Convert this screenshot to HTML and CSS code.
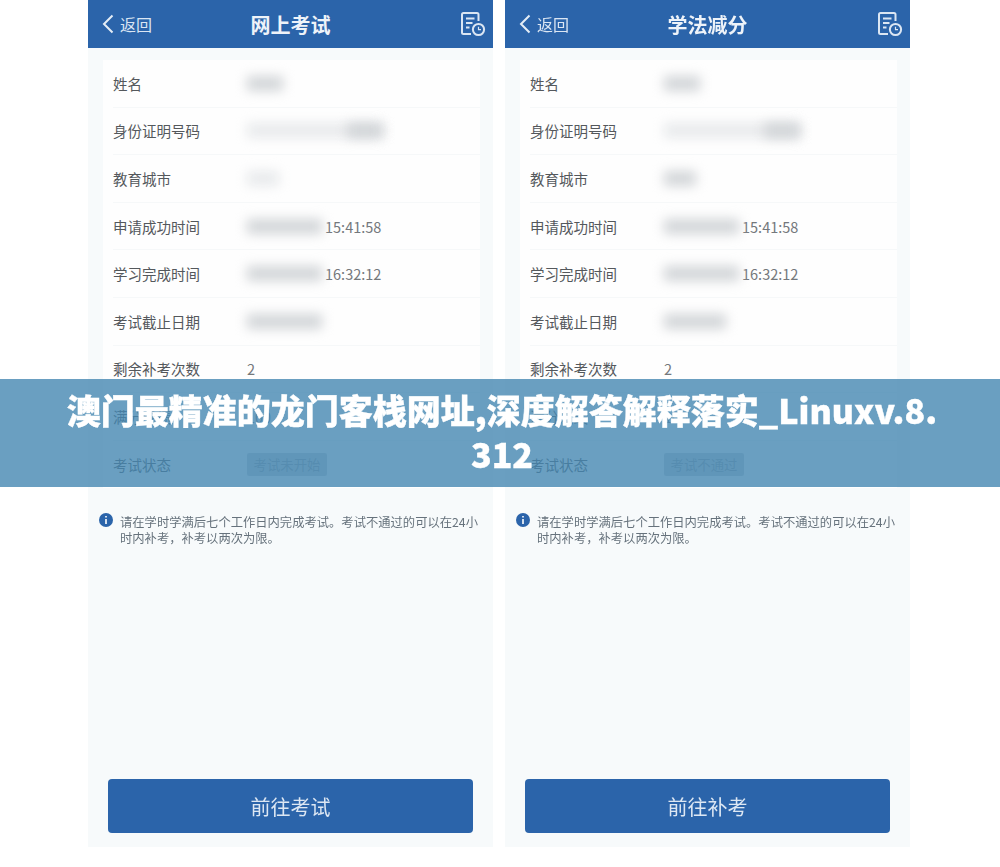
FILE: index.html
```html
<!DOCTYPE html>
<html lang="zh-CN">
  <head>
    <meta charset="utf-8">
    <title>澳门最精准的龙门客栈网址</title>
    <link rel="stylesheet" href="styles.css">
  </head>
  <body>
    <div class="phones">
      <div class="phone">
        <div class="top-bar">
          <div class="back">
            <svg class="back-icon" viewBox="0 0 12 20"><path d="M10.5 1.5 L2 10 L10.5 18.5"/></svg>
            <span>返回</span>
          </div>
          <div class="bar-title">网上考试</div>
          <svg class="doc-icon" viewBox="0 0 26 26">
            <path d="M18.5 10V3.5a1.5 1.5 0 0 0-1.5-1.5H3.5A1.5 1.5 0 0 0 2 3.5v18A1.5 1.5 0 0 0 3.500 23H11"/>
            <path d="M6 7.500h8.500M6 12h6.500M6 16.500h3.500"/>
            <circle cx="18.500" cy="18.500" r="5.600"/>
            <path class="thin" d="M18.500 15.800v2.900h2.500"/>
          </svg>
        </div>
        <div class="card">
          <div class="row"><span class="label">姓名</span><span class="smear w-36"></span></div>
          <div class="row"><span class="label">身份证明号码</span><span class="smear faint w-100"></span><span class="smear w-36 tuck"></span></div>
          <div class="row"><span class="label">教育城市</span><span class="smear faint w-32"></span></div>
          <div class="row"><span class="label">申请成功时间</span><span class="smear w-75"></span><span class="time">15:41:58</span></div>
          <div class="row"><span class="label">学习完成时间</span><span class="smear w-75"></span><span class="time">16:32:12</span></div>
          <div class="row"><span class="label">考试截止日期</span><span class="smear w-75"></span></div>
          <div class="row"><span class="label">剩余补考次数</span><span class="value">2</span></div>
          <div class="row"><span class="label">满分成绩</span><span class="value">100</span></div>
          <div class="row"><span class="label">考试状态</span><span class="badge">考试未开始</span></div>
        </div>
        <div class="note">
          <svg class="info-icon" viewBox="0 0 14 14"><circle cx="7" cy="7" r="7"/><path d="M7 3v1.600M7 6v5"/></svg>
          <p>请在学时学满后七个工作日内完成考试。考试不通过的可以在24小时内补考，补考以两次为限。</p>
        </div>
        <button class="action">前往考试</button>
      </div>

      <div class="phone">
        <div class="top-bar">
          <div class="back">
            <svg class="back-icon" viewBox="0 0 12 20"><path d="M10.5 1.5 L2 10 L10.5 18.5"/></svg>
            <span>返回</span>
          </div>
          <div class="bar-title">学法减分</div>
          <svg class="doc-icon" viewBox="0 0 26 26">
            <path d="M18.5 10V3.5a1.5 1.5 0 0 0-1.5-1.5H3.5A1.5 1.5 0 0 0 2 3.5v18A1.5 1.5 0 0 0 3.500 23H11"/>
            <path d="M6 7.500h8.500M6 12h6.500M6 16.500h3.500"/>
            <circle cx="18.500" cy="18.500" r="5.600"/>
            <path class="thin" d="M18.500 15.800v2.900h2.500"/>
          </svg>
        </div>
        <div class="card">
          <div class="row"><span class="label">姓名</span><span class="smear w-36"></span></div>
          <div class="row"><span class="label">身份证明号码</span><span class="smear faint w-100"></span><span class="smear w-36 tuck"></span></div>
          <div class="row"><span class="label">教育城市</span><span class="smear w-32"></span></div>
          <div class="row"><span class="label">申请成功时间</span><span class="smear w-75"></span><span class="time">15:41:58</span></div>
          <div class="row"><span class="label">学习完成时间</span><span class="smear w-75"></span><span class="time">16:32:12</span></div>
          <div class="row"><span class="label">考试截止日期</span><span class="smear w-62"></span></div>
          <div class="row"><span class="label">剩余补考次数</span><span class="value">2</span></div>
          <div class="row"><span class="label">满分成绩</span><span class="value">100</span></div>
          <div class="row"><span class="label">考试状态</span><span class="badge">考试不通过</span></div>
        </div>
        <div class="note">
          <svg class="info-icon" viewBox="0 0 14 14"><circle cx="7" cy="7" r="7"/><path d="M7 3v1.600M7 6v5"/></svg>
          <p>请在学时学满后七个工作日内完成考试。考试不通过的可以在24小时内补考，补考以两次为限。</p>
        </div>
        <button class="action">前往补考</button>
      </div>
    </div>

    <div class="banner">
      <h1>澳门最精准的龙门客栈网址,深度解答解释落实_Linuxv.8.312</h1>
    </div>
  </body>
</html>
```

FILE: styles.css
```css
html, body {
  margin: 0;
  height: 867px;
  overflow: hidden;
  background-color: #ffffff;
}

body {
  position: relative;
  font-family: "Noto Sans CJK SC", "Noto Sans", sans-serif;
}

.phones {
  display: flex;
  gap: 12px;
  padding-left: 88px;
  filter: blur(0.6px);
}

.phone {
  width: 405px;
  height: 847px;
  display: flex;
  flex-direction: column;
  background-color: #f7fafb;
}

.top-bar {
  height: 48px;
  flex: none;
  display: flex;
  align-items: center;
  justify-content: space-between;
  padding: 0 7px 0 14px;
  background-color: #2b64aa;
  color: #ffffff;
}

.back {
  width: 120px;
  display: flex;
  align-items: center;
  gap: 6px;
  font-size: 16px;
  color: #dbe6f3;
}

.back-icon {
  width: 12px;
  height: 20px;
  fill: none;
  stroke: #e4edf6;
  stroke-width: 2;
}

.bar-title {
  margin-left: -4px;
  font-size: 20px;
  font-weight: 700;
  color: #eef3f9;
}

.doc-icon {
  width: 26px;
  height: 26px;
  margin-left: 97px;
  fill: none;
  stroke: #dbe6f3;
  stroke-width: 2;
}

.doc-icon .thin {
  stroke-width: 1.2;
}

.card {
  margin: 12px 13px 0 15px;
  padding: 0 0 0 10px;
  background-color: #fefefe;
}

.row {
  height: 47.6px;
  box-sizing: border-box;
  display: flex;
  align-items: center;
  border-bottom: 1px solid #f6f8f9;
  font-size: 14.5px;
  color: #54585c;
}

.row:last-child {
  border-bottom: none;
}

.label {
  width: 134px;
  flex: none;
}

.value, .time {
  color: #74787c;
}

.time {
  margin-left: 3px;
}

.smear {
  height: 15px;
  background-color: #d2d5d8;
  filter: blur(6px);
}

.smear.faint {
  background-color: #e8eaec;
}

.tuck {
  margin-left: -36px;
}

.w-32 { width: 32px; }
.w-36 { width: 36px; }
.w-62 { width: 62px; }
.w-75 { width: 75px; }
.w-100 { width: 136px; }

.badge {
  width: 80px;
  height: 23px;
  line-height: 23px;
  text-align: center;
  font-size: 13.4px;
  border-radius: 2px;
  background-color: #ced3d8;
  color: #9aa1a8;
}

.note {
  display: flex;
  gap: 7px;
  margin: 25px 12px 0 11px;
}

.info-icon {
  flex: none;
  width: 14px;
  height: 14px;
  fill: #2b64aa;
  stroke: #ffffff;
  stroke-width: 1.6;
}

.info-icon circle {
  stroke: none;
}

.note p {
  margin: 2px 0 0;
  font-size: 12.3px;
  line-height: 15.5px;
  color: #66727c;
  word-break: break-all;
}

.action {
  margin: auto 20px 14px;
  height: 54px;
  flex: none;
  border: none;
  border-radius: 4px;
  background-color: #2b64aa;
  color: #dde7f3;
  font-family: inherit;
  font-size: 20px;
}

.banner {
  position: absolute;
  top: 379px;
  left: 0;
  width: 100%;
  height: 108px;
  box-sizing: border-box;
  padding: 9px 60px 0 64px;
  background-color: rgba(69, 135, 177, 0.8);
}

.banner h1 {
  margin: 0;
  font-size: 34px;
  line-height: 44px;
  font-weight: 900;
  text-align: center;
  color: #ffffff;
  -webkit-text-stroke: 0.4px #ffffff;
  word-break: break-all;
}
```
